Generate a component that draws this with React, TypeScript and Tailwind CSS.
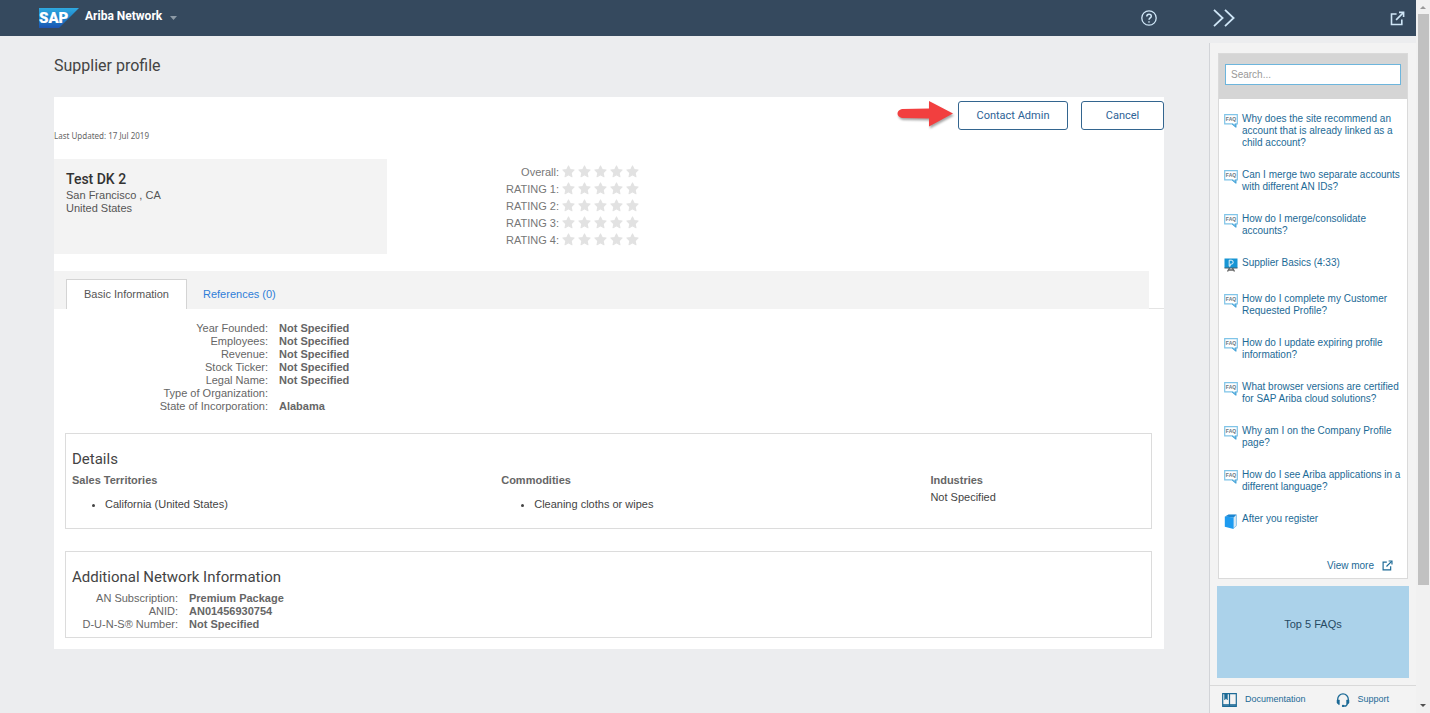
import React from "react";

type HelpKind = "faq" | "video" | "book";

const helpItems: { kind: HelpKind; text: string }[] = [
  { kind: "faq", text: "Why does the site recommend an account that is already linked as a child account?" },
  { kind: "faq", text: "Can I merge two separate accounts with different AN IDs?" },
  { kind: "faq", text: "How do I merge/consolidate accounts?" },
  { kind: "video", text: "Supplier Basics (4:33)" },
  { kind: "faq", text: "How do I complete my Customer Requested Profile?" },
  { kind: "faq", text: "How do I update expiring profile information?" },
  { kind: "faq", text: "What browser versions are certified for SAP Ariba cloud solutions?" },
  { kind: "faq", text: "Why am I on the Company Profile page?" },
  { kind: "faq", text: "How do I see Ariba applications in a different language?" },
  { kind: "book", text: "After you register" },
];

const basicInfo: [string, string][] = [
  ["Year Founded:", "Not Specified"],
  ["Employees:", "Not Specified"],
  ["Revenue:", "Not Specified"],
  ["Stock Ticker:", "Not Specified"],
  ["Legal Name:", "Not Specified"],
  ["Type of Organization:", ""],
  ["State of Incorporation:", "Alabama"],
];

const networkInfo: [string, string][] = [
  ["AN Subscription:", "Premium Package"],
  ["ANID:", "AN01456930754"],
  ["D-U-N-S® Number:", "Not Specified"],
];

const ratings = ["Overall:", "RATING 1:", "RATING 2:", "RATING 3:", "RATING 4:"];

function SapLogo() {
  return (
    <svg width="40" height="20" viewBox="0 0 40 20" role="img" aria-label="SAP">
      <defs>
        <linearGradient id="sap" x1="0" y1="0" x2="0" y2="1">
          <stop offset="0" stopColor="#2fa9e0" />
          <stop offset="0.5" stopColor="#1c83cb" />
          <stop offset="1" stopColor="#1c54b2" />
        </linearGradient>
      </defs>
      <path d="M0 0H40L20 20H0Z" fill="url(#sap)" />
      <text
        x="0"
        y="15"
        fontSize="15"
        fontWeight="900"
        fill="#fff"
        stroke="#fff"
        strokeWidth="0.2"
        fontFamily="Roboto, sans-serif"
      >
        SAP
      </text>
    </svg>
  );
}

function ExternalIcon({ size }: { size: number }) {
  return (
    <svg width={size} height={size} viewBox="0 0 16 16" fill="none" stroke="currentColor" strokeWidth="1.7" aria-hidden="true">
      <path d="M7 3.2H1.6V14.4H12.6V9" />
      <path d="M6.5 9.5L14 2" />
      <path d="M9.6 1.5H14.5V6.4" />
    </svg>
  );
}

function HelpItemIcon({ kind }: { kind: HelpKind }) {
  if (kind === "video") {
    return (
      <svg width="14" height="14" viewBox="0 0 14 14" aria-hidden="true" className="shrink-0">
        <path d="M3.5 13.5L5.5 10M10.5 13.5L8.5 10M4.5 12H9.5" stroke="#666" strokeWidth="1.4" fill="none" />
        <rect x="0.5" y="0.5" width="13" height="9.5" fill="#1795d4" />
        <path d="M5.2 2.2H7.2A1.9 1.9 0 0 1 7.2 6.2H6.2V8.2H5.2Z" fill="#1795d4" stroke="#fff" strokeWidth="0.9" />
        <path d="M0.5 10H13.5" stroke="#47616f" strokeWidth="1" />
      </svg>
    );
  }
  if (kind === "book") {
    return (
      <svg width="14" height="15" viewBox="0 0 14 15" aria-hidden="true" className="shrink-0">
        <path d="M1 2.5L4.5 0.5H13V12L9.5 14.5Z" fill="#d8e8f4" />
        <path d="M1 2.6L4.5 0.6H12.6L9.6 3.4Z" fill="#1b86d1" />
        <path d="M0.8 2.5L9.6 3.6V15L0.8 12.8Z" fill="#1e9bf0" />
        <path d="M12.4 1V11.6L10 13.8" stroke="#8fc4ea" strokeWidth="1" fill="none" />
      </svg>
    );
  }
  return (
    <svg width="14" height="14" viewBox="0 0 14 14" aria-hidden="true" className="shrink-0">
      <path d="M0.7 0.7H13.3V9.8H11.8V12.9L8 9.8H0.7Z" fill="#fff" stroke="#7fc4e8" strokeWidth="1.2" />
      <path d="M8 9.8L11.8 13V9.8" fill="#8cc9ea" stroke="#3a9cd4" strokeWidth="0.9" />
      <text x="7" y="7.2" textAnchor="middle" fontSize="5" fontWeight="700" fill="#6a767e" fontFamily="Liberation Sans, sans-serif">
        FAQ
      </text>
    </svg>
  );
}

function Star() {
  return (
    <svg width="13" height="13" viewBox="0 0 24 24" fill="#e2e2e2" stroke="#e2e2e2" strokeWidth="2" strokeLinejoin="round" aria-hidden="true">
      <path d="M12 1.6l3.1 6.6 7.3.9-5.4 5.2 1.4 7.4L12 18.1l-6.4 3.6 1.4-7.4L1.6 9.1l7.3-.9z" />
    </svg>
  );
}

function FieldTable({ rows, labelClass }: { rows: [string, string][]; labelClass: string }) {
  return (
    <table className="text-[11px] leading-[13px] text-[#666]">
      <tbody>
        {rows.map(([label, value]) => (
          <tr key={label}>
            <th scope="row" className={`${labelClass} p-0 text-right font-normal`}>{label}</th>
            <td className="p-0 pl-[11px] font-bold">{value}</td>
          </tr>
        ))}
      </tbody>
    </table>
  );
}

function Header() {
  return (
    <header className="flex h-9 items-center bg-[#35495e] pr-[11px] pl-[39px] text-[#cfe6f7]">
      <SapLogo />
      <button className="ml-[6px] flex items-center gap-2 pb-1 font-['Roboto',sans-serif] text-[12px] font-bold text-white">
        Ariba Network
        <svg width="7" height="4" viewBox="0 0 7 4" className="mt-1" aria-hidden="true">
          <path d="M0 0H7L3.5 4Z" fill="#8d9aa6" />
        </svg>
      </button>
      <div className="ml-auto flex w-[264px] items-center">
        <button aria-label="Help">
          <svg width="16" height="16" viewBox="0 0 16 16" fill="none" stroke="currentColor" strokeWidth="1.3" aria-hidden="true">
            <circle cx="8" cy="8" r="7.2" />
            <path d="M5.8 6.4C5.8 3.4 10.3 3.5 10.3 6.2C10.3 7.9 8 7.9 8 9.8" strokeWidth="1.5" />
            <circle cx="8" cy="11.9" r="0.5" fill="currentColor" strokeWidth="0.6" />
          </svg>
        </button>
        <button aria-label="Collapse help panel" className="ml-14">
          <svg width="22" height="18" viewBox="0 0 22 18" fill="none" stroke="currentColor" strokeWidth="1.8" aria-hidden="true">
            <path d="M1 0.8L9.6 9L1 17.2M12 0.8L20.6 9L12 17.2" />
          </svg>
        </button>
        <button aria-label="Open in new window" className="ml-auto">
          <ExternalIcon size={15} />
        </button>
      </div>
    </header>
  );
}

function Profile() {
  return (
    <main className="min-w-0 flex-1 pt-5 pr-[45px] pl-[54px]">
      <h1 className="font-['Roboto',sans-serif] text-[16px] leading-5 text-[#444]">Supplier profile</h1>
      <div className="mt-[21px] bg-white pb-[11px]">
        <div className="flex justify-end pt-1">
          <svg width="58" height="30" viewBox="0 0 58 30" className="drop-shadow-[1px_2px_1px_rgba(0,0,0,0.35)]" aria-hidden="true">
            <path d="M5 8L32 7.5V0L56 12.5L32 25.5V17.5L5 17C-1 16 -1 9 5 8Z" fill="#f23f3f" />
          </svg>
          <button className="ml-[3px] h-[29px] w-[110px] rounded-[3px] border border-[#33658f] bg-white pt-[2px] font-['Roboto',sans-serif] text-[11px] text-[#2d6296]">
            Contact Admin
          </button>
          <button className="ml-[13px] h-[29px] w-[83px] rounded-[3px] border border-[#33658f] bg-white pt-[2px] font-['Roboto',sans-serif] text-[11px] text-[#2d6296]">
            Cancel
          </button>
        </div>
        <p className="font-['Noto_Sans',sans-serif] text-[8px] leading-[10px] text-[#666]">Last Updated: 17 Jul 2019</p>

        <div className="mt-[18px] flex">
          <section className="h-[95px] w-[30%] bg-[#f3f3f3] px-3 pt-[11px] text-[11px] leading-[13px] text-[#555]">
            <h2 className="font-['Roboto',sans-serif] text-[14px] leading-[19px] font-medium text-[#333]">Test DK 2</h2>
            <p>San Francisco , CA</p>
            <p>United States</p>
          </section>
          <section aria-label="Ratings" className="ml-[119px] pt-[5px] text-[11px] text-[#777]">
            {ratings.map((label) => (
              <div key={label} className="flex h-[17px] items-center gap-[3px]">
                <span className="w-[53px] text-right whitespace-nowrap">{label}</span>
                <span className="flex gap-[3px] pb-[2px]">
                  <Star /><Star /><Star /><Star /><Star />
                </span>
              </div>
            ))}
          </section>
        </div>

        <nav className="mt-[17px] flex">
          <div className="flex h-[38px] flex-1 items-end bg-[#f3f3f3] pl-3 text-[11px]">
            <button className="h-[30px] w-[121px] border border-b-0 border-[#d4d4d4] bg-white text-[#555]">Basic Information</button>
            <a href="#references" className="flex h-[30px] items-center px-4 text-[#2f7ed8]">References (0)</a>
          </div>
          <div className="w-[15px] border-b border-[#e4e4e4]" />
        </nav>

        <div className="pt-[13px]">
          <FieldTable rows={basicInfo} labelClass="w-[214px]" />
        </div>

        <section className="mt-5 mr-3 ml-[11px] border border-[#dcdcdc] px-[6px] pt-4 pb-[15px] text-[11px] text-[#444]">
          <h2 className="font-['Roboto',sans-serif] text-[15px] leading-[18px]">Details</h2>
          <div className="mt-1 grid grid-cols-[2fr_2fr_1fr] leading-[17px]">
            <div>
              <h3 className="font-bold text-[#666]">Sales Territories</h3>
              <ul className="mt-[7px] list-disc pl-[33px] leading-[17px]"><li>California (United States)</li></ul>
            </div>
            <div>
              <h3 className="font-bold text-[#666]">Commodities</h3>
              <ul className="mt-[7px] list-disc pl-[33px] leading-[17px]"><li>Cleaning cloths or wipes</li></ul>
            </div>
            <div>
              <h3 className="font-bold text-[#666]">Industries</h3>
              <p>Not Specified</p>
            </div>
          </div>
        </section>

        <section className="mt-[22px] mr-3 ml-[11px] border border-[#dcdcdc] px-[6px] pt-4 pb-[6px] text-[#444]">
          <h2 className="mb-[6px] font-['Roboto',sans-serif] text-[15px] leading-[18px]">Additional Network Information</h2>
          <FieldTable rows={networkInfo} labelClass="w-[106px]" />
        </section>
      </div>
    </main>
  );
}

function HelpPanel() {
  return (
    <aside className="mt-[7px] flex w-[207px] shrink-0 flex-col border-l border-[#d2d4d8] bg-[#f3f3f3] text-[#1c6a96]">
      <div className="mx-2 mt-[10px] border border-[#dadada] bg-white">
        <div className="bg-[#d5d5d5] px-[6px] pt-[10px] pb-[14px]">
          <input
            type="search"
            aria-label="Search"
            placeholder="Search..."
            className="block h-[21px] w-full border border-[#6db5dc] bg-white px-[5px] text-[10px] outline-none placeholder:text-[#999]"
          />
        </div>
        <ul className="flex flex-col gap-5 pt-[14px] pl-[5px] text-[10px] leading-3">
          {helpItems.map((item) => (
            <li key={item.text} className="flex min-h-4 gap-1">
              <span className="w-[14px] shrink-0 pt-[1px]"><HelpItemIcon kind={item.kind} /></span>
              <a href="#help">{item.text}</a>
            </li>
          ))}
        </ul>
        <a href="#more" className="mt-[30px] mr-[14px] mb-[6px] flex items-center justify-end gap-2 text-[10px] leading-[13px]">
          View more <ExternalIcon size={11} />
        </a>
      </div>
      <button className="mx-[7px] mt-[7px] h-[92px] bg-[#abd2ea] pb-4 text-[11px] text-[#274a63]">Top 5 FAQs</button>
      <footer className="mt-[7px] flex h-7 items-center border-t border-[#d9d9d9] pl-3 text-[9px]">
        <a href="#documentation" className="flex items-center gap-2">
          <svg width="15" height="14" viewBox="0 0 15 14" fill="none" stroke="currentColor" strokeWidth="1.2" aria-hidden="true">
            <path d="M0.7 0.7H14.3V13.3H0.7ZM7.5 0.7V13.3" />
            <path d="M0.7 12H14.3" strokeWidth="1.6" />
            <path d="M2.5 1V7L4 5.5L5.5 7V1Z" fill="currentColor" strokeWidth="0.4" />
          </svg>
          Documentation
        </a>
        <a href="#support" className="ml-[30px] flex items-center gap-2">
          <svg width="14" height="14" viewBox="0 0 14 14" fill="none" stroke="currentColor" strokeWidth="1.3" aria-hidden="true">
            <path d="M1.7 8V6.2A5.3 5.3 0 0 1 12.3 6.2V8" />
            <path d="M1 7H3.4V11.6H2.6L1 10ZM13 7H10.6V11.6H11.4L13 10Z" fill="currentColor" strokeWidth="0.5" />
            <path d="M11.4 11.4L9.8 13H7" />
            <circle cx="7" cy="13" r="0.5" fill="currentColor" />
          </svg>
          Support
        </a>
      </footer>
    </aside>
  );
}

function ScrollTrack() {
  return (
    <div aria-hidden="true" className="flex w-[14px] shrink-0 flex-col items-center bg-[#f1f1f1]">
      <svg width="14" height="14" viewBox="0 0 14 14"><path d="M4 9H10L7 6Z" fill="#9a9a9a" /></svg>
      <div className="h-[571px] w-[11px] bg-[#c1c1c1]" />
      <svg width="14" height="14" viewBox="0 0 14 14" className="mt-auto"><path d="M4 5H10L7 8Z" fill="#505050" /></svg>
    </div>
  );
}

export default function App() {
  return (
    <div className="flex min-h-screen bg-[#ecedef] font-['Liberation_Sans',Arial,sans-serif]">
      <div className="flex min-w-0 flex-1 flex-col">
        <Header />
        <div className="flex flex-1">
          <Profile />
          <HelpPanel />
        </div>
      </div>
      <ScrollTrack />
    </div>
  );
}
